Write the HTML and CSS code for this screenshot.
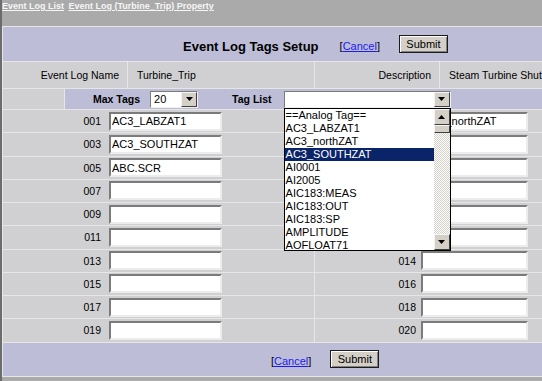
FILE: index.html
```html
<!DOCTYPE html>
<html lang="en">
    <head>
        <meta charset="UTF-8">
        <title>Event Log Tags Setup</title>
        <link rel="stylesheet" href="styles.css">
    </head>
    <body>
        <div class="crumbs">
            <a href="#">Event Log List</a>
            <a href="#">Event Log (Turbine_Trip) Property</a>
        </div>
        <table class="setup">
            <colgroup>
                <col class="c1"><col class="c2"><col class="c3"><col class="c4"><col class="c5">
            </colgroup>
            <tr class="head">
                <td colspan="5">
                    <div class="bar bar-top">
                        <span class="title">Event Log Tags Setup</span>
                        <span class="cancel">[<a href="#">Cancel</a>]</span>
                        <button class="btn">Submit</button>
                    </div>
                </td>
            </tr>
            <tr class="info">
                <td colspan="2" class="key">Event Log Name</td>
                <td class="val">Turbine_Trip</td>
                <td class="key">Description</td>
                <td class="val">Steam Turbine Shutdown</td>
            </tr>
            <tr class="opts">
                <td class="blank"></td>
                <td colspan="4" class="opts-cell">
                    <div class="opts-bar">
                        <span class="opt-label">Max Tags</span>
                        <div class="select sel-max">
                            <span class="sel-value">20</span>
                            <span class="sel-arrow"><svg width="7" height="4"><path d="M0 0h7L3.5 4z"/></svg></span>
                        </div>
                        <span class="opt-label tag-label">Tag List</span>
                        <div class="select sel-tags">
                            <span class="sel-value"></span>
                            <span class="sel-arrow"><svg width="7" height="4"><path d="M0 0h7L3.5 4z"/></svg></span>
                            <div class="listbox">
                                <ul>
                                    <li>==Analog Tag==</li>
                                    <li>AC3_LABZAT1</li>
                                    <li>AC3_northZAT</li>
                                    <li class="picked">AC3_SOUTHZAT</li>
                                    <li>AI0001</li>
                                    <li>AI2005</li>
                                    <li>AIC183:MEAS</li>
                                    <li>AIC183:OUT</li>
                                    <li>AIC183:SP</li>
                                    <li>AMPLITUDE</li>
                                    <li>AOFLOAT71</li>
                                </ul>
                                <div class="scroll">
                                    <span class="sbtn"><svg width="7" height="4"><path d="M0 4h7L3.5 0z"/></svg></span>
                                    <span class="thumb"></span>
                                    <span class="sbtn sbtn-down"><svg width="7" height="4"><path d="M0 0h7L3.5 4z"/></svg></span>
                                </div>
                            </div>
                        </div>
                    </div>
                </td>
            </tr>
            <tr class="tag">
                <td colspan="3" class="left"><span class="num">001</span><input type="text" value="AC3_LABZAT1"></td>
                <td colspan="2" class="right"><span class="num">002</span><input type="text" value="AC3_northZAT"></td>
            </tr>
            <tr class="tag">
                <td colspan="3" class="left"><span class="num">003</span><input type="text" value="AC3_SOUTHZAT"></td>
                <td colspan="2" class="right"><span class="num">004</span><input type="text"></td>
            </tr>
            <tr class="tag">
                <td colspan="3" class="left"><span class="num">005</span><input type="text" value="ABC.SCR"></td>
                <td colspan="2" class="right"><span class="num">006</span><input type="text"></td>
            </tr>
            <tr class="tag">
                <td colspan="3" class="left"><span class="num">007</span><input type="text"></td>
                <td colspan="2" class="right"><span class="num">008</span><input type="text"></td>
            </tr>
            <tr class="tag">
                <td colspan="3" class="left"><span class="num">009</span><input type="text"></td>
                <td colspan="2" class="right"><span class="num">010</span><input type="text"></td>
            </tr>
            <tr class="tag">
                <td colspan="3" class="left"><span class="num">011</span><input type="text"></td>
                <td colspan="2" class="right"><span class="num">012</span><input type="text"></td>
            </tr>
            <tr class="tag">
                <td colspan="3" class="left"><span class="num">013</span><input type="text"></td>
                <td colspan="2" class="right"><span class="num">014</span><input type="text"></td>
            </tr>
            <tr class="tag">
                <td colspan="3" class="left"><span class="num">015</span><input type="text"></td>
                <td colspan="2" class="right"><span class="num">016</span><input type="text"></td>
            </tr>
            <tr class="tag">
                <td colspan="3" class="left"><span class="num">017</span><input type="text"></td>
                <td colspan="2" class="right"><span class="num">018</span><input type="text"></td>
            </tr>
            <tr class="tag">
                <td colspan="3" class="left"><span class="num">019</span><input type="text"></td>
                <td colspan="2" class="right"><span class="num">020</span><input type="text"></td>
            </tr>
            <tr class="foot">
                <td colspan="5">
                    <div class="bar bar-bottom">
                        <span class="cancel">[<a href="#">Cancel</a>]</span>
                        <button class="btn">Submit</button>
                    </div>
                </td>
            </tr>
        </table>
    </body>
</html>
```

FILE: styles.css
```css
html {
    overflow: hidden;
}
body {
    font-family: "Liberation Sans", Arial, sans-serif;
    font-size: 11px;
    color: #000;
    margin: 0;
    min-height: 100vh;
    box-sizing: border-box;
    background-color: #aaaaaa;
    border-left: 2px solid #6c6c6c;
}
.crumbs {
    height: 26px;
    font-size: 9px;
    font-weight: bold;
    line-height: 12px;
}
.crumbs a {
    color: #f6f6f6;
    margin-right: 2px;
}
.setup {
    border-spacing: 1px;
    background-color: #e6e6e6;
    table-layout: fixed;
    width: 609px;
}
.setup td {
    padding: 0;
    white-space: nowrap;
}
.c1 { width: 61px; }
.c2 { width: 62px; }
.c3 { width: 186px; }
.c4 { width: 124px; }
.c5 { width: 170px; }

.head td,
.foot td,
.opts-cell {
    background-color: #bdbdd7;
}
.info td,
.tag td,
.blank {
    background-color: #d0d0d2;
}
.bar {
    display: flex;
    align-items: center;
}
.bar-top {
    height: 34px;
    padding-left: 180px;
}
.bar-bottom {
    height: 33px;
    padding-left: 268px;
}
.title {
    font-size: 13px;
    font-weight: bold;
    margin-top: 5px;
}
.cancel {
    font-size: 11px;
    margin-top: 4px;
}
.bar-top .cancel {
    margin-left: 21px;
}
.cancel a {
    color: #1b1bf0;
}
.btn {
    font-family: inherit;
    font-size: 11px;
    width: 49px;
    height: 18px;
    padding: 0 0 1px;
    margin-left: 19px;
    background-color: #d4d0c8;
    border: 1px solid #1c1c1c;
    box-shadow: inset 1px 1px #fff, inset -1px -1px #808080;
    color: #000;
}

.info td {
    height: 26px;
    font-size: 10.5px;
}
.info .key {
    text-align: right;
    padding-right: 8px;
}
.info .val {
    padding-left: 9px;
    overflow: hidden;
}

.opts td {
    height: 20px;
}
.opts-bar {
    display: flex;
    align-items: center;
}
.opt-label {
    font-weight: bold;
    font-size: 10.5px;
    margin-left: 28px;
    margin-right: 10px;
}
.tag-label {
    margin-left: 34px;
    margin-right: 12px;
}
.select {
    position: relative;
    display: flex;
    align-items: center;
    height: 17px;
    box-sizing: border-box;
    background-color: #fff;
    border: 1px solid;
    border-color: #7b7b7b #f0f0f0 #f0f0f0 #7b7b7b;
}
.sel-max {
    width: 48px;
}
.sel-tags {
    width: 167px;
}
.sel-value {
    flex: 1;
    padding-left: 3px;
}
.sel-arrow,
.sbtn {
    display: flex;
    align-items: center;
    justify-content: center;
    width: 16px;
    height: 15px;
    box-sizing: border-box;
    background-color: #d4d0c8;
    border: 1px solid;
    border-color: #f4f4f4 #404040 #404040 #f4f4f4;
}
.listbox {
    position: absolute;
    top: 16px;
    left: -1px;
    width: 167px;
    height: 143px;
    box-sizing: border-box;
    background-color: #fff;
    border: 1px solid #000;
    overflow: hidden;
    z-index: 2;
}
.listbox ul {
    list-style: none;
    margin: 0;
    padding: 0;
    width: 149px;
}
.listbox li {
    height: 13px;
    line-height: 13px;
    padding-left: 1px;
}
.listbox li.picked {
    background-color: #0a246a;
    color: #fff;
}
.scroll {
    position: absolute;
    top: 0;
    right: 0;
    bottom: 0;
    width: 16px;
    display: flex;
    flex-direction: column;
    background: repeating-conic-gradient(#d4d0c8 0 25%, #fff 0 50%) 0 0 / 2px 2px;
}
.scroll .sbtn {
    height: 16px;
}
.thumb {
    height: 8px;
    box-sizing: border-box;
    background-color: #d4d0c8;
    border: 1px solid;
    border-color: #f4f4f4 #404040 #404040 #f4f4f4;
}
.sbtn-down {
    margin-top: auto;
}

.tag td {
    height: 22.25px;
    vertical-align: middle;
}
.left {
    padding-left: 68px !important;
}
.right {
    padding-left: 71px !important;
}
.num {
    display: inline-block;
    width: 30px;
    font-size: 10.5px;
    text-align: right;
    vertical-align: middle;
}
.tag input {
    font-family: inherit;
    font-size: 11px;
    height: 19px;
    box-sizing: border-box;
    padding: 0 0 0 1px;
    vertical-align: middle;
    border: 2px solid;
    border-color: #7b7b7b #ececec #ececec #7b7b7b;
    background-color: #fff;
}
.left input {
    width: 113px;
    margin-left: 8px;
}
.right input {
    width: 107px;
    margin-left: 5px;
}
```
